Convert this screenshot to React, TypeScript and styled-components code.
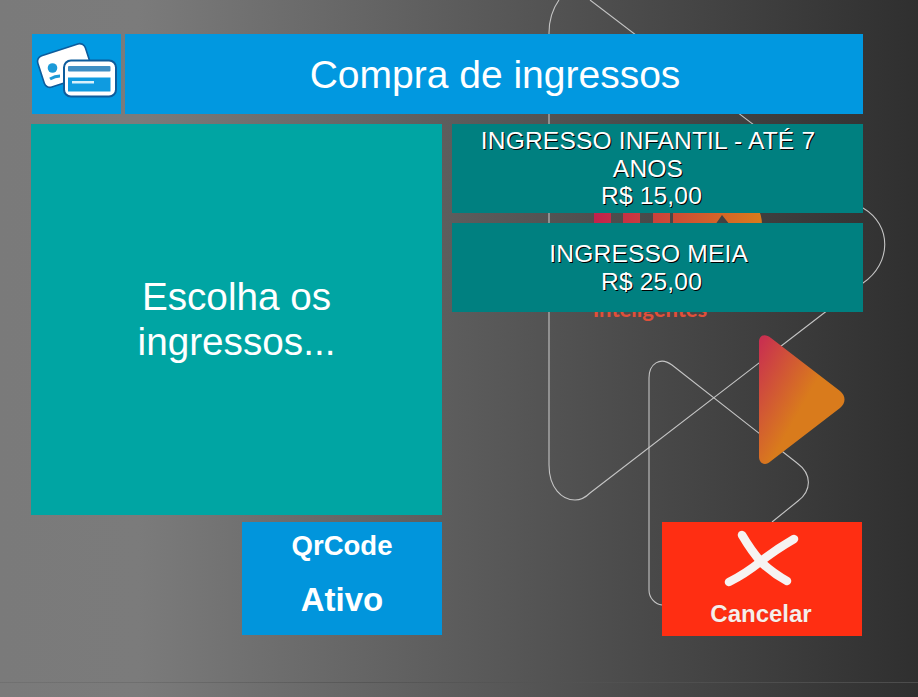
import React from "react";
import styled, { createGlobalStyle } from "styled-components";

const Global = createGlobalStyle`
  html, body { margin: 0; padding: 0; height: 100%; overflow: hidden; }
  body { font-family: "Liberation Sans", Arial, sans-serif; }
`;

const Page = styled.div`
  position: relative;
  width: 918px;
  height: 697px;
  overflow: hidden;
  background: linear-gradient(90deg, #7a7a7a 0%, #7b7b7b 15%, #2f2f2f 100%);
`;

const Backdrop = styled.svg`
  position: absolute;
  inset: 0;
  width: 918px;
  height: 697px;
`;

const Content = styled.main`
  position: relative;
  display: flex;
  flex-direction: column;
  padding: 34px 55px 0 32px;
`;

const Header = styled.header`
  display: flex;
  gap: 4px;
  height: 80px;
`;

const IconTile = styled.div`
  width: 89px;
  background: #019ae2;
  display: flex;
`;

const TitleBar = styled.h1`
  flex: 1;
  margin: 0;
  display: flex;
  align-items: center;
  justify-content: center;
  background: #0198e0;
  color: #fff;
  font-size: 39px;
  line-height: 45px;
  font-weight: 400;
  padding: 1px 0 0 2px;
  box-sizing: border-box;
`;

const Columns = styled.div`
  display: grid;
  grid-template-columns: 410px 411px;
  column-gap: 10px;
  margin-top: 10px;
`;

const Prompt = styled.section`
  height: 391px;
  background: #00a5a3;
  color: #fff;
  font-size: 38.7px;
  line-height: 45px;
  display: flex;
  align-items: center;
  justify-content: center;
  text-align: center;
  padding: 0 100px 2px;
  box-sizing: border-box;
  margin-left: -1px;
  width: 411px;
`;

const Tickets = styled.div`
  display: flex;
  flex-direction: column;
  gap: 10px;
`;

const Ticket = styled.button`
  height: 89px;
  border: 0;
  margin: 0;
  padding: 0 12px 0 0;
  background: #008080;
  color: #fff;
  font-family: inherit;
  font-size: 24.6px;
  letter-spacing: 0.15px;
  line-height: 27.5px;
  text-align: center;
  white-space: pre-wrap;
  text-shadow: 1px 1px 0 #000;
`;

const Actions = styled.div`
  display: grid;
  grid-template-columns: 410px 411px;
  column-gap: 10px;
  margin-top: 7px;
`;

const QrPanel = styled.div`
  justify-self: end;
  width: 200px;
  height: 113px;
  background: #0195dc;
  color: #fff;
  font-weight: 700;
  display: flex;
  flex-direction: column;
  align-items: center;
`;

const QrLabel = styled.div`
  font-size: 27.5px;
  line-height: 31px;
  margin-top: 8px;
`;

const QrState = styled.div`
  font-size: 33px;
  line-height: 38px;
  margin-top: 20px;
`;

const CancelButton = styled.button`
  justify-self: end;
  width: 200px;
  height: 114px;
  margin: 0 1px 0 0;
  padding: 0 2px 0 0;
  border: 0;
  background: #ff2e12;
  color: #f8eeea;
  font-family: inherit;
  font-weight: 700;
  font-size: 24px;
  line-height: 28px;
  display: flex;
  flex-direction: column;
  align-items: center;
  text-shadow: 0 0 1px #b8321a;
`;

const CancelIcon = styled.svg`
  width: 200px;
  height: 78px;
  display: block;
  margin-right: -2px;
`;

const Footer = styled.div`
  position: absolute;
  left: 0;
  right: 0;
  top: 682px;
  height: 1px;
  background: linear-gradient(90deg, rgba(0,0,0,.08) 0%, rgba(0,0,0,.14) 40%, rgba(255,255,255,0) 60%, rgba(255,255,255,.14) 100%);
`;

export default function App() {
  return (
    <Page>
      <Global />
      <Backdrop viewBox="0 0 918 697" aria-hidden="true">
        <defs>
          <linearGradient id="play" x1="0.02" y1="0.05" x2="0.55" y2="0.5">
            <stop offset="0" stopColor="#c9304f" />
            <stop offset="1" stopColor="#d97b1c" />
          </linearGradient>
          <linearGradient id="logo" gradientUnits="userSpaceOnUse" x1="594" y1="0" x2="762" y2="0">
            <stop offset="0" stopColor="#c2214c" />
            <stop offset="1" stopColor="#d97b1c" />
          </linearGradient>
        </defs>
        <g fill="none" stroke="#c4c4c4" strokeWidth="1.1">
          <path d="M559 0 Q549 14 549 33 V465 C549 488 562 500 575 500 Q583 500 590 493 L863 283 C892 263 892 225 863 208 L590 0" />
          <path d="M649 590 V378 C649 364 660 356 672 365 L797 463 C812 474 812 490 798 501 L772 522 M649 590 C649 598 655 604 662 605" />
        </g>
        <g fill="url(#logo)">
          <rect x="594" y="205" width="17" height="20" />
          <rect x="623" y="205" width="17" height="20" />
          <rect x="653" y="205" width="17" height="20" />
          <path d="M673 205 H756 Q762 214 762 225 H730 L722 215 L715 225 H673 Z" />
        </g>
        <text x="650" y="317" textAnchor="middle" fontFamily="Lato, sans-serif" fontWeight="700" fontSize="22" fill="#e0503a">Inteligentes</text>
        <path
          d="M759 342 C759 335 765 333 771 338 L840 391 C846 396 846 403 840 408 L771 461 C765 467 759 463 759 457 Z"
          fill="url(#play)"
        />
      </Backdrop>
      <Content>
        <Header>
          <IconTile>
            <svg width="89" height="80" viewBox="32 34 89 80" aria-hidden="true">
              <g transform="rotate(-18 65 66)">
                <rect x="40" y="49" width="50" height="33" rx="6" fill="#fff" stroke="#0d5c9c" strokeWidth="1.6" />
              </g>
              <circle cx="52.5" cy="68" r="4.8" fill="#1b9ad8" />
              <path d="M50 79 Q55 76 60 76" fill="none" stroke="#1b9ad8" strokeWidth="3" />
              <rect x="64" y="60.5" width="52" height="36" rx="7" fill="#fff" stroke="#0d5c9c" strokeWidth="2" />
              <rect x="68" y="66" width="42.5" height="5.5" rx="1" fill="#3f8fc4" />
              <rect x="68" y="77.5" width="42.5" height="14" fill="#0f9be0" />
              <rect x="72" y="81" width="22" height="2.5" fill="#d8f0fb" />
            </svg>
          </IconTile>
          <TitleBar>Compra de ingressos</TitleBar>
        </Header>
        <Columns>
          <Prompt>Escolha os ingressos...</Prompt>
          <Tickets>
            <Ticket>{"INGRESSO INFANTIL - ATÉ 7 \nANOS \nR$ 15,00"}</Ticket>
            <Ticket>{"INGRESSO MEIA \nR$ 25,00"}</Ticket>
          </Tickets>
        </Columns>
        <Actions>
          <QrPanel>
            <QrLabel>QrCode</QrLabel>
            <QrState>Ativo</QrState>
          </QrPanel>
          <CancelButton>
            <CancelIcon viewBox="662 522 200 78" aria-hidden="true">
              <g fill="none" stroke="#f6f3f2" strokeWidth="8.5" strokeLinecap="round">
                <path d="M742 535 Q752 552 762 563 Q774 574 787 581" />
                <path d="M794 539 Q775 550 760 562 Q745 574 729 582" />
              </g>
            </CancelIcon>
            Cancelar
          </CancelButton>
        </Actions>
      </Content>
      <Footer />
    </Page>
  );
}
